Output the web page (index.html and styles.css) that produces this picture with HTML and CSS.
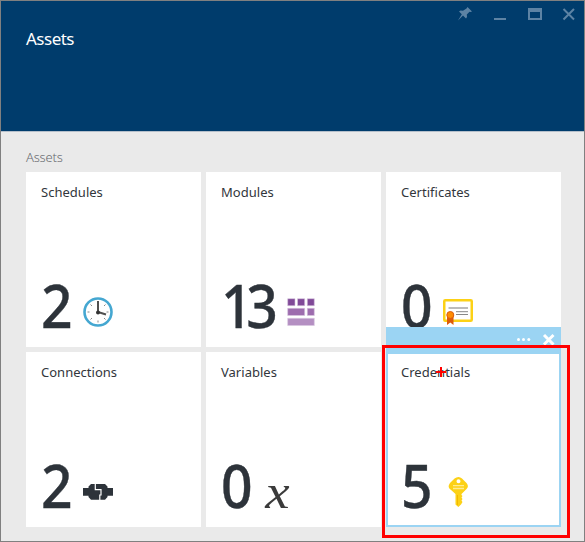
FILE: index.html
```html
<!DOCTYPE html>
<html lang="en">
<head>
<meta charset="utf-8">
<title>Assets</title>
<link rel="stylesheet" href="styles.css">
</head>
<body>
<div class="blade">
  <header class="header">
    <div class="controls">
      <svg width="130" height="20" viewBox="0 0 130 20">
        <g fill="#5d83a4">
          <path d="M9.500 1 14 5.500 12.500 6 11.500 5.800 8.800 8.500 9 11 8 12.500 5 9.500 0 14.500 3.800 8.300 1 5.500 2.500 4.500 5 4.800 8.500 2.500Z"/>
          <rect x="36" y="12" width="12" height="2"/>
          <path fill-rule="evenodd" d="M70 2H84V14H70ZM72 6V12H82V6Z"/>
        </g>
        <path d="M105.500 3 116 13.500M116 3 105.500 13.500" stroke="#5d83a4" stroke-width="2"/>
      </svg>
    </div>
    <h1 class="title">Assets</h1>
  </header>
  <main class="content">
    <h2 class="section">Assets</h2>
    <div class="grid">
      <section class="tile">
        <h3 class="name">Schedules</h3>
        <div class="metric"><span class="count"><span class="digits">2</span></span>
          <svg class="icon" viewBox="0 0 30 30"><circle cx="15" cy="15" r="13.500" fill="#fff" stroke="#45a7d1" stroke-width="2.600"/><path d="M4.500 15H6.500M23.500 15H25.500M15 23.500V25.500M7.500 7.500 9 9M22.500 7.500 21 9M7.500 22.500 9 21M22.500 22.500 21 21" stroke="#888" stroke-width="1"/><path d="M15 4V15L23 17.500" fill="none" stroke="#505050" stroke-width="2"/><circle cx="15" cy="15.500" r="2" fill="#333"/></svg>
        </div>
      </section>
      <section class="tile">
        <h3 class="name">Modules</h3>
        <div class="metric"><span class="count double"><span class="digits">13</span></span>
          <svg class="icon" viewBox="0 0 30 30"><g stroke="#d9c8e0" stroke-width=".6"><path fill="#804998" d="M1.700 1.700H9V8.700H1.700ZM11.500 1.700H18.700V8.700H11.500ZM21.300 1.700H28.300V8.700H21.300Z"/><path fill="#9d6cae" d="M1.700 11.300H18.700V18.500H1.700ZM21.300 11.300H28.300V18.500H21.300Z"/><path fill="#b48fc2" d="M1.700 21.300H28.300V28.500H1.700Z"/></g></svg>
        </div>
      </section>
      <section class="tile">
        <h3 class="name">Certificates</h3>
        <div class="metric"><span class="count"><span class="digits">0</span></span>
          <svg class="icon" viewBox="0 0 30 30"><rect x="1.250" y="3.250" width="27.500" height="20.500" rx="1" fill="#fff" stroke="#fcd116" stroke-width="2.500"/><path d="M5.500 11H25" stroke="#b5b5b5" stroke-width="1.800"/><path d="M13 14.700H25M13 17.500H25" stroke="#888"/><path fill="#dc5b0a" d="M4 18H10.500V28L7.300 25.500 4 28Z"/><circle cx="7.300" cy="18" r="3.500" fill="#ff8c00" stroke="#dc5b0a"/></svg>
        </div>
        <div class="toolbar">
          <svg width="60" height="20" viewBox="0 0 60 20"><g fill="#fff"><circle cx="17.500" cy="12.500" r="1.500"/><circle cx="22.500" cy="12.500" r="1.500"/><circle cx="27.800" cy="12.500" r="1.500"/></g><path d="M43 8 52.500 17.500M52.500 8 43 17.500" stroke="#fff" stroke-width="3"/></svg>
        </div>
      </section>
      <section class="tile">
        <h3 class="name">Connections</h3>
        <div class="metric"><span class="count"><span class="digits">2</span></span>
          <svg class="icon" viewBox="0 0 30 30"><path fill="#2d333a" d="M0 11H5.500V9.500L8 7H22L24.500 9.500V11H30V18.700H24.500V20L22 22.700H8L5.500 20V18.700H0Z"/><path d="M12.300 6V12.700H18V18H16.800V23" fill="none" stroke="#fff" stroke-width="1.200"/></svg>
        </div>
      </section>
      <section class="tile">
        <h3 class="name">Variables</h3>
        <div class="metric"><span class="count"><span class="digits">0</span></span><span class="icon variable">x</span></div>
      </section>
      <section class="tile selected">
        <h3 class="name">Credentials</h3>
        <div class="metric"><span class="count"><span class="digits">5</span></span>
          <svg class="icon" viewBox="0 0 30 30"><path fill="#fcd116" fill-rule="evenodd" d="M15.500 0C18 0 20 2.500 22.500 5 25.500 8 25.500 10 23.500 12L18.500 17V18L19.500 19 18.500 20.500 19.500 22 18.500 23.500 19.500 25 18 27.500 15.300 30 12.500 27.500V17L7.500 12.500C5 10.500 5 8 8 5 10.500 2.500 12.500 0 15.500 0ZM15.500 2.200A2 2 0 1 0 15.500 6.200 2 2 0 1 0 15.500 2.200Z"/><path d="M10 8.700H21M10 11.500H21" stroke="#ffec91" stroke-width="1.300"/><path d="M14.500 18V28" stroke="#f2b800"/></svg>
        </div>
        <svg class="cursor" viewBox="0 0 10 10"><path d="M0 5H10M5 0V10" stroke="#f00" stroke-width="2"/></svg>
        <div class="highlight"></div>
      </section>
    </div>
  </main>
</div>
</body>
</html>
```
FILE: styles.css
```css
* { box-sizing: border-box; }
body { margin: 0; font-family: "Noto Sans", "Open Sans", sans-serif; }
h1, h2, h3 { margin: 0; font-weight: 400; white-space: nowrap; }
svg { display: block; }
.blade { width: 585px; height: 542px; border: 1px solid #808080; background: #eaeaea; overflow: hidden; }
.header { height: 131px; background: #003c6c; border-bottom: 1px solid #b5bfca; color: #fff; }
.controls { display: flex; justify-content: flex-start; height: 26px; padding: 5px 0 0 457px; }
.controls svg { flex: none; }
.title { padding-left: 25px; font-size: 17px; line-height: 24px; letter-spacing: -.5px; }
.content { padding: 15px 23px 0 25px; }
.section { height: 25px; font-size: 13px; line-height: 21px; color: #686b70; letter-spacing: -.2px; font-weight: 300; }
.grid { display: grid; grid-template-columns: repeat(3, 175px); grid-auto-rows: 175px; gap: 5px; }
.tile { position: relative; padding: 10px 15px 20px; background: #fff; display: flex; flex-direction: column; justify-content: space-between; }
.name { color: #32363c; font-size: 13px; line-height: 20px; letter-spacing: .02px; }
.metric { display: flex; align-items: flex-end; height: 44px; }
.count { width: 42px; flex: none; color: #2d333a; font-size: 60px; line-height: 44px; font-weight: 500; -webkit-text-stroke: .4px #2d333a; }
.digits { display: inline-block; transform: scaleX(.92); transform-origin: left; }
.double { width: 65px; letter-spacing: -7px; }
.icon { width: 30px; height: 30px; flex: none; }
.variable { font: italic 49px/30px "Liberation Serif", serif; color: #3b3b3b; padding-left: 2px; transform: scaleX(1.12); transform-origin: left; }
.toolbar { position: absolute; left: 0; right: 0; bottom: 0; height: 20px; padding-left: 115px; background: #9bd4f3; }
.selected::before { content: ""; position: absolute; inset: 0; border: 2px solid #9bd4f3; }
.selected::after { content: ""; position: absolute; left: 0; right: 0; top: -5px; height: 7px; background: #9bd4f3; }
.cursor { position: absolute; left: 50px; top: 15px; width: 10px; height: 10px; }
.highlight { position: absolute; z-index: 2; left: -4px; top: -7px; width: 188px; height: 193px; border: 3px solid #f00; }
```
